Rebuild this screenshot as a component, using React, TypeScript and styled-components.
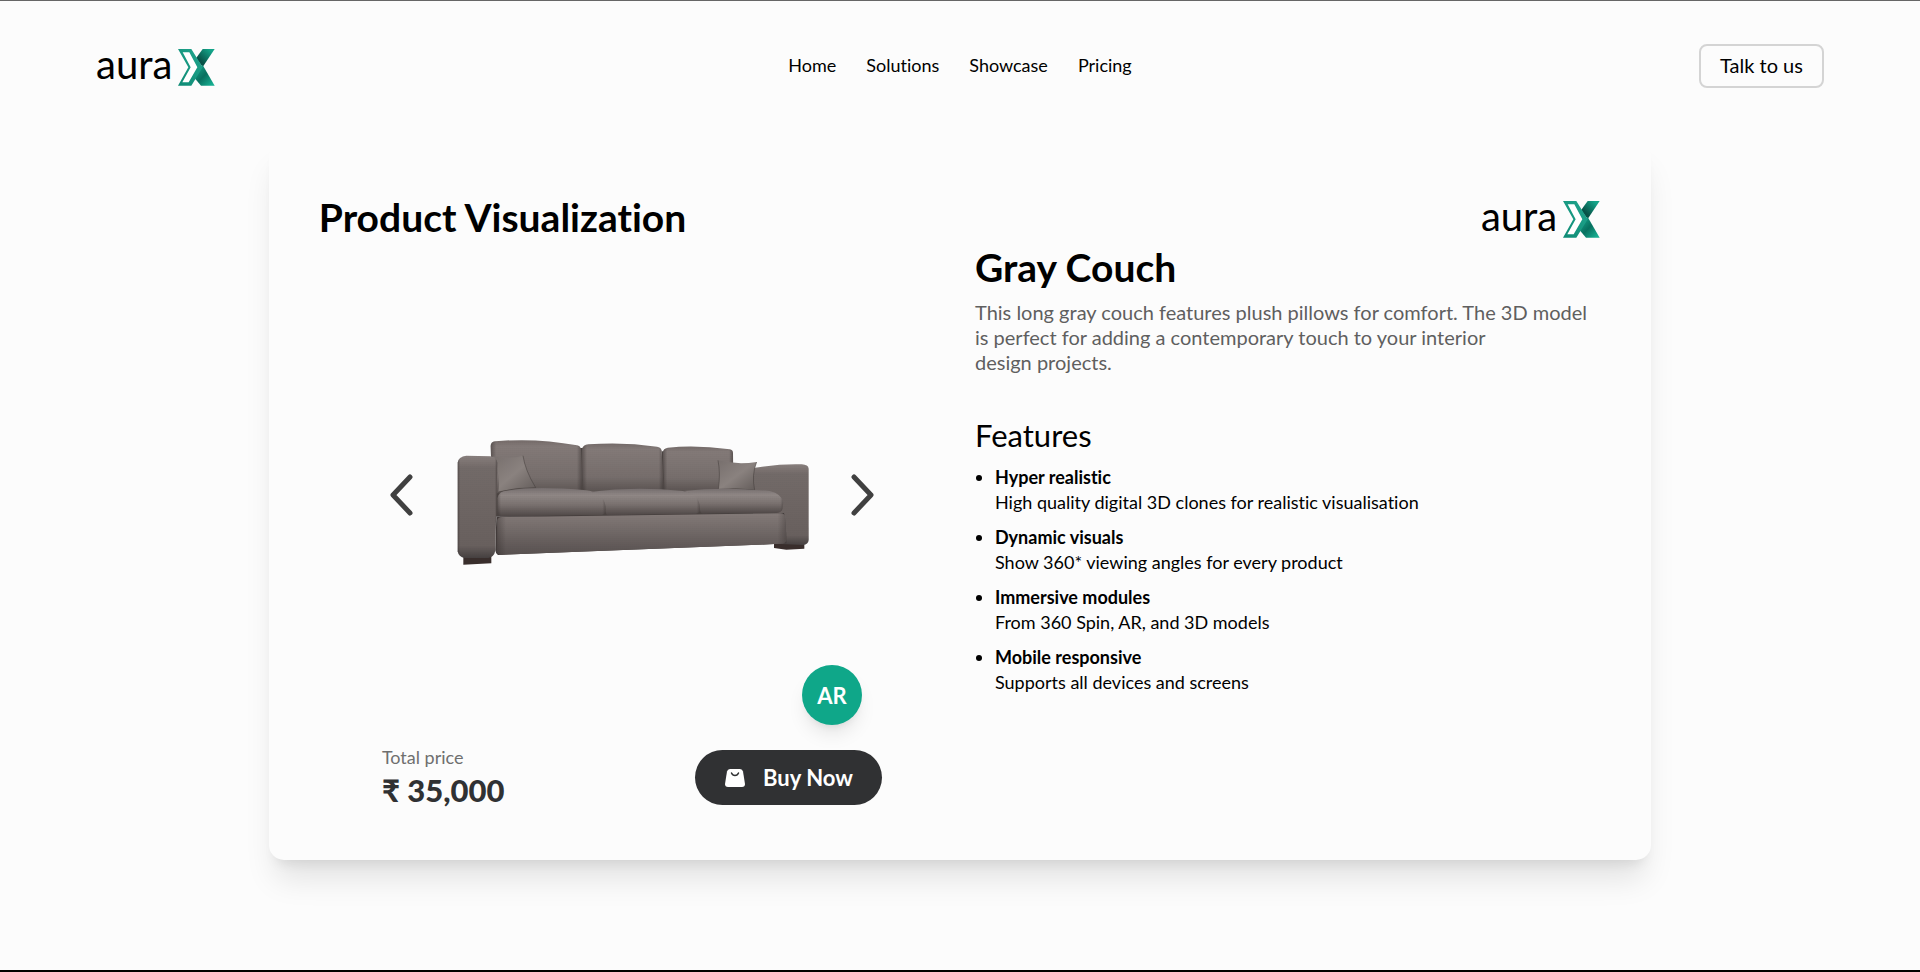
import React from "react";
import styled, { createGlobalStyle } from "styled-components";

const GlobalStyle = createGlobalStyle`
  *, *::before, *::after { box-sizing: border-box; }
  body {
    margin: 0;
    background: #fcfcfc;
    color: #000;
    font-family: Lato, "Liberation Sans", sans-serif;
    font-variant-ligatures: none;
  }
  h1, h2, h3, p, ul, dl, dd { margin: 0; padding: 0; }
  button { font: inherit; font-variant-ligatures: none; cursor: pointer; }
  a { color: inherit; text-decoration: none; }
`;

const Page = styled.div`
  min-height: 100vh;
  border-top: 1px solid #666;
  border-bottom: 2px solid #000;
`;

const Header = styled.header`
  display: grid;
  grid-template-columns: 1fr auto 1fr;
  align-items: center;
  padding: 40px 5% 0;
`;

const Nav = styled.nav`
  display: flex;
  gap: 30px;
  font-size: 18px;
  line-height: 25px;
`;

const TalkButton = styled.button`
  justify-self: end;
  width: 125px;
  height: 44px;
  border: 2px solid #d4d4d4;
  border-radius: 8px;
  background: transparent;
  color: #000;
  font-size: 20px;
  line-height: 25px;
  padding: 0;
`;

const LogoLink = styled.a`
  display: flex;
  align-items: center;
  gap: 5px;
  width: max-content;
  padding-top: 4px;
`;

const LogoWord = styled.span`
  font-size: 40px;
  line-height: 39px;
  padding-bottom: 6px;
`;

const Main = styled.main`
  padding: 50px 14% 110px;
`;

const Card = styled.section`
  display: grid;
  grid-template-columns: 1fr 1fr;
  gap: 30px;
  padding: 50px;
  border-radius: 15px;
  background: #fcfcfc;
  box-shadow: 0 25px 31px -6px rgba(0, 0, 0, 0.1), 0 10px 13px -8px rgba(0, 0, 0, 0.1);
`;

const Title = styled.h1`
  font-size: 39px;
  line-height: 55px;
  font-weight: 700;
`;

const Viewer = styled.div`
  width: 100%;
  max-width: 500px;
  margin: 0 auto;
`;

const Stage = styled.div`
  position: relative;
  display: flex;
  align-items: center;
  justify-content: space-between;
  aspect-ratio: 1;
  padding: 0 8px;
`;

const ArrowButton = styled.button`
  display: flex;
  border: 0;
  padding: 0;
  background: transparent;
`;

const ArButton = styled.button`
  position: absolute;
  right: 20px;
  bottom: 20px;
  width: 60px;
  height: 60px;
  border: 0;
  border-radius: 50%;
  padding: 0;
  background: #0fa789;
  color: #fff;
  font-size: 22px;
  font-weight: 700;
  box-shadow: 0 12px 19px -4px rgba(0, 0, 0, 0.1), 0 5px 8px -5px rgba(0, 0, 0, 0.1);
`;

const PurchaseRow = styled.div`
  display: flex;
  align-items: center;
  justify-content: space-between;
`;

const PriceLabel = styled.dt`
  font-size: 18px;
  line-height: 25px;
  color: #6f6f6f;
`;

const PriceValue = styled.dd`
  font-size: 31px;
  line-height: 40px;
  font-weight: 900;
  color: #303133;
`;

const BuyButton = styled.button`
  display: flex;
  align-items: center;
  gap: 18px;
  height: 55px;
  padding: 0 29px 0 30px;
  border: 0;
  border-radius: 28px;
  background: #303133;
  color: #fff;
  font-size: 22px;
  font-weight: 700;
`;

const Brand = styled.div`
  display: flex;
  justify-content: flex-end;
  align-items: center;
  height: 55px;
`;

const ProductName = styled.h2`
  font-size: 39px;
  line-height: 45px;
  font-weight: 700;
`;

const Description = styled.p`
  margin-top: 10px;
  font-size: 20px;
  line-height: 25px;
  color: #5f5f5f;
`;

const FeaturesTitle = styled.h3`
  margin-top: 40px;
  font-size: 31px;
  line-height: 40px;
  font-weight: 400;
`;

const FeatureList = styled.ul`
  display: grid;
  gap: 10px;
  margin-top: 10px;
  list-style: none;
  font-size: 18px;
  line-height: 25px;
`;

const Feature = styled.li`
  display: grid;
  grid-template-columns: 20px 1fr;
  align-items: center;

  &::before {
    content: "";
    width: 6px;
    height: 6px;
    margin-left: 1px;
    border-radius: 50%;
    background: #000;
  }

  p { grid-column: 2; }
`;

function Logo({ id }: { id: string }) {
  return (
    <LogoLink href="#" aria-label="auraX">
      <LogoWord>aura</LogoWord>
      <svg width="39" height="39" viewBox="291 57 117 117" aria-hidden="true">
        <defs>
          <linearGradient id={`${id}-up`} x1="0" y1="1" x2="1" y2="0">
            <stop offset="0.3" stopColor="#075247" />
            <stop offset="0.85" stopColor="#14a489" />
          </linearGradient>
          <linearGradient id={`${id}-down`} x1="0" y1="0" x2="1" y2="1">
            <stop offset="0.1" stopColor="#16a087" />
            <stop offset="0.5" stopColor="#08705f" />
            <stop offset="0.9" stopColor="#16ad90" />
          </linearGradient>
          <linearGradient id={`${id}-left`} x1="0" y1="1" x2="1" y2="0">
            <stop offset="0" stopColor="#0e8a74" />
            <stop offset="1" stopColor="#22a78f" />
          </linearGradient>
        </defs>
        <path d="M368 60H404L368 114L348 88Z" fill={`url(#${id}-up)`} />
        <path d="M368 108L404 170H363L343 146Z" fill={`url(#${id}-down)`} />
        <path d="M294 60H334L368 115L334 170H294L325 115Z" fill={`url(#${id}-left)`} />
        <path d="M308 70H328L352 115L326 160H307L332 115Z" fill="#fff" />
      </svg>
    </LogoLink>
  );
}

function Arrow({ points }: { points: string }) {
  return (
    <svg width="24" height="42" viewBox="0 0 24 42" aria-hidden="true">
      <polyline points={points} fill="none" stroke="#404040" strokeWidth="5" strokeLinecap="round" strokeLinejoin="round" />
    </svg>
  );
}

const backCushions = [
  "M363 78Q363 66 376 64Q500 53 622 76Q632 78 634 88L638 214H500L380 220L364 110Z",
  "M637 88Q640 75 656 73Q760 65 862 80Q874 82 876 92L882 214H640Z",
  "M880 96Q881 86 894 83Q980 74 1080 88Q1090 90 1090 100L1091 214H884Z",
];

const seatCushions = [
  "M384 235Q386 218 402 214Q490 196 650 211Q705 218 708 248V272Q706 284 694 285L396 289Q386 289 384 278Z",
  "M664 215Q800 198 940 213Q988 220 991 245V270Q989 280 978 281L718 286Q708 286 708 274Q711 225 664 215Z",
  "M940 213Q1070 199 1200 213Q1237 222 1241 248L1238 268Q1235 278 1222 279L1000 281Q991 280 991 268Q992 222 940 213Z",
];

const rightArm = "M1150 144Q1230 131 1296 133Q1316 134 1317 146V360Q1316 374 1300 375L1235 372L1150 300Z";
const leftArm = "M264 128Q266 110 290 107L362 109Q382 112 383 128L377 392Q373 411 355 414H285Q267 411 264 394Z";
const basePanel = "M383 302Q384 292 398 291L1232 280Q1246 281 1247 292L1250 356Q1250 370 1238 371L395 404Q384 404 383 392Z";

function Fabric({ d, shade, edge }: { d: string; shade: string; edge?: string }) {
  return (
    <g>
      <path d={d} fill={`url(#${shade})`} />
      {edge && <path d={d} fill={`url(#${edge})`} />}
      <path d={d} fill="url(#weave)" />
    </g>
  );
}

function Couch() {
  return (
    <svg width="356" height="142" viewBox="253 12 1068 426" role="img" aria-label="Gray couch">
      <defs>
        <linearGradient id="back" x1="0" y1="0" x2="0" y2="1">
          <stop offset="0" stopColor="#756c6a" />
          <stop offset="0.12" stopColor="#847b79" />
          <stop offset="0.7" stopColor="#776f6d" />
          <stop offset="1" stopColor="#5b5452" />
        </linearGradient>
        <linearGradient id="seat" x1="0" y1="0" x2="0" y2="1">
          <stop offset="0" stopColor="#777070" />
          <stop offset="0.25" stopColor="#918987" />
          <stop offset="0.6" stopColor="#7a7270" />
          <stop offset="1" stopColor="#4e4746" />
        </linearGradient>
        <linearGradient id="base" x1="0" y1="0" x2="0" y2="1">
          <stop offset="0" stopColor="#857c7a" />
          <stop offset="0.3" stopColor="#78706e" />
          <stop offset="1" stopColor="#585150" />
        </linearGradient>
        <linearGradient id="arm" x1="0" y1="0" x2="0" y2="1">
          <stop offset="0" stopColor="#8a817f" />
          <stop offset="0.12" stopColor="#736b69" />
          <stop offset="0.88" stopColor="#69615f" />
          <stop offset="1" stopColor="#454040" />
        </linearGradient>
        <linearGradient id="side" x1="0" y1="0" x2="1" y2="0">
          <stop offset="0" stopColor="#2c2625" stopOpacity="0.45" />
          <stop offset="0.06" stopColor="#2c2625" stopOpacity="0" />
          <stop offset="0.94" stopColor="#2c2625" stopOpacity="0" />
          <stop offset="1" stopColor="#2c2625" stopOpacity="0.5" />
        </linearGradient>
        <linearGradient id="soft" x1="0" y1="0" x2="1" y2="0">
          <stop offset="0" stopColor="#2c2625" stopOpacity="0.35" />
          <stop offset="0.03" stopColor="#2c2625" stopOpacity="0" />
          <stop offset="0.97" stopColor="#2c2625" stopOpacity="0" />
          <stop offset="1" stopColor="#2c2625" stopOpacity="0.35" />
        </linearGradient>
        <linearGradient id="pillow" x1="0" y1="0" x2="1" y2="1">
          <stop offset="0" stopColor="#776f6d" />
          <stop offset="0.5" stopColor="#8a827f" />
          <stop offset="1" stopColor="#625b59" />
        </linearGradient>
        <pattern id="weave" width="6" height="6" patternUnits="userSpaceOnUse">
          <path d="M0 1H6M1 0V6" stroke="#3a3331" strokeWidth="1" opacity="0.13" />
        </pattern>
      </defs>

      <path d="M281 408H365V430L281 434Z" fill="#392e2c" />
      <path d="M1213 370H1304V386L1250 389L1213 384Z" fill="#392e2c" />
      <path d="M370 130H630V84H640V130H876V94H884V130H1060L1240 240V290H370Z" fill="#4a4341" />

      {backCushions.map((d) => <Fabric key={d} d={d} shade="back" edge="side" />)}
      <Fabric d={rightArm} shade="arm" />

      <path d="M370 108Q384 112 402 114Q435 114 460 107Q466 150 498 203Q440 202 386 216Q393 160 370 108Z" fill="url(#pillow)" />
      <path d="M386 216Q440 202 498 203Q466 150 460 107" fill="none" stroke="#403937" strokeWidth="3" opacity="0.5" />
      <path d="M1045 121Q1100 135 1161 126Q1145 165 1155 210Q1100 204 1046 208Q1053 160 1045 121Z" fill="url(#pillow)" />
      <path d="M1045 121Q1053 160 1046 208Q1100 204 1155 210Q1145 165 1161 126" fill="none" stroke="#403937" strokeWidth="3" opacity="0.5" />

      {seatCushions.map((d) => <Fabric key={d} d={d} shade="seat" edge="soft" />)}

      <path d="M380 290L1243 279Q1250 310 1250 370L1200 373L385 405Q377 400 377 388Z" fill="#423b3a" />
      <Fabric d={basePanel} shade="base" edge="soft" />
      <Fabric d={leftArm} shade="arm" edge="side" />
    </svg>
  );
}

const links = ["Home", "Solutions", "Showcase", "Pricing"];

const features = [
  { name: "Hyper realistic", text: "High quality digital 3D clones for realistic visualisation" },
  { name: "Dynamic visuals", text: "Show 360* viewing angles for every product" },
  { name: "Immersive modules", text: "From 360 Spin, AR, and 3D models" },
  { name: "Mobile responsive", text: "Supports all devices and screens" },
];

export default function App() {
  return (
    <Page>
      <GlobalStyle />
      <Header>
        <Logo id="header-logo" />
        <Nav>
          {links.map((link) => (
            <a key={link} href="#">{link}</a>
          ))}
        </Nav>
        <TalkButton>Talk to us</TalkButton>
      </Header>
      <Main>
        <Card>
          <div>
            <Title>Product Visualization</Title>
            <Viewer>
              <Stage>
                <ArrowButton aria-label="Previous product"><Arrow points="20,3 3,21 20,39" /></ArrowButton>
                <Couch />
                <ArrowButton aria-label="Next product"><Arrow points="4,3 21,21 4,39" /></ArrowButton>
                <ArButton>AR</ArButton>
              </Stage>
              <PurchaseRow>
                <dl>
                  <PriceLabel>Total price</PriceLabel>
                  <PriceValue>₹ 35,000</PriceValue>
                </dl>
                <BuyButton>
                  <svg width="20" height="18" viewBox="0 0 20 18" aria-hidden="true">
                    <path d="M5 0H15Q17.500 0 18 2.500L20 15Q20 18 17 18H3Q0 18 0 15L2 2.500Q2.500 0 5 0Z" fill="#fff" />
                    <path d="M6.500 4Q7.500 6.500 10 6.500Q12.500 6.500 13.500 4" fill="none" stroke="#303133" strokeWidth="1.500" strokeLinecap="round" />
                  </svg>
                  Buy Now
                </BuyButton>
              </PurchaseRow>
            </Viewer>
          </div>
          <div>
            <Brand><Logo id="card-logo" /></Brand>
            <ProductName>Gray Couch</ProductName>
            <Description>
              This long gray couch features plush pillows for comfort. The 3D model is perfect for adding a
              contemporary touch to your interior design{"\u00a0"}projects.
            </Description>
            <FeaturesTitle>Features</FeaturesTitle>
            <FeatureList>
              {features.map((feature) => (
                <Feature key={feature.name}>
                  <strong>{feature.name}</strong>
                  <p>{feature.text}</p>
                </Feature>
              ))}
            </FeatureList>
          </div>
        </Card>
      </Main>
    </Page>
  );
}
